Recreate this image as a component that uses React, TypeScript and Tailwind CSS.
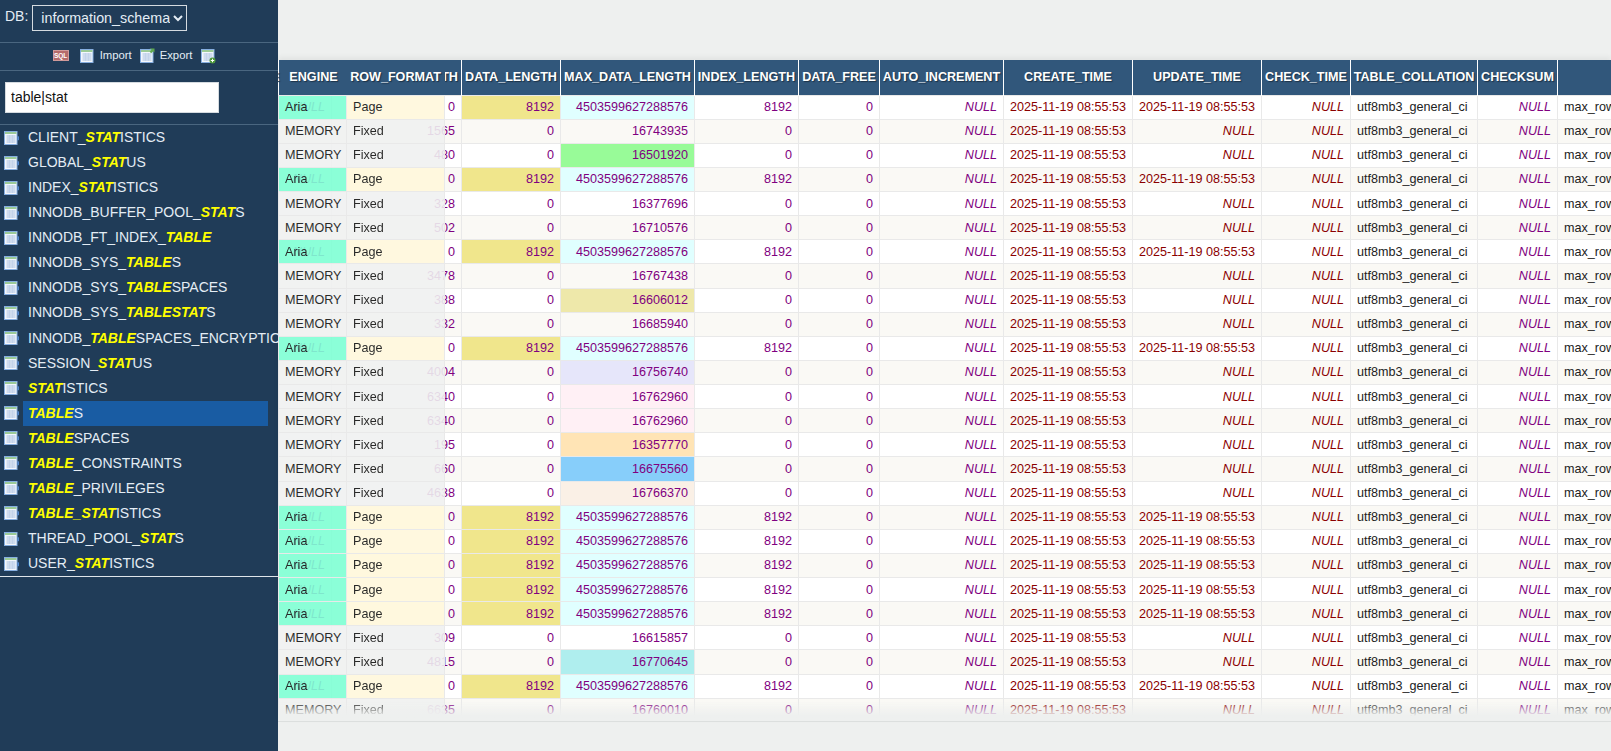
import React from 'react'

const FONT = "font-['Liberation_Sans',Arial,sans-serif]"

const rows: { aria?: boolean; avg?: string; max?: string; maxBg?: string }[] = [
  { aria: true },
  { avg: '1565', max: '16743935' },
  { avg: '480', max: '16501920', maxBg: 'bg-[#98fb98]' },
  { aria: true },
  { avg: '328', max: '16377696' },
  { avg: '502', max: '16710576' },
  { aria: true },
  { avg: '3478', max: '16767438' },
  { avg: '388', max: '16606012', maxBg: 'bg-[#eee8aa]' },
  { avg: '332', max: '16685940' },
  { aria: true },
  { avg: '4004', max: '16756740', maxBg: 'bg-[#e6e6fa]' },
  { avg: '6340', max: '16762960', maxBg: 'bg-[#fff0f5]' },
  { avg: '6340', max: '16762960', maxBg: 'bg-[#fff0f5]' },
  { avg: '195', max: '16357770', maxBg: 'bg-[#ffe4b5]' },
  { avg: '660', max: '16675560', maxBg: 'bg-[#87cefa]' },
  { avg: '4638', max: '16766370', maxBg: 'bg-[#faf0e6]' },
  { aria: true },
  { aria: true },
  { aria: true },
  { aria: true },
  { aria: true },
  { avg: '309', max: '16615857' },
  { avg: '4815', max: '16770645', maxBg: 'bg-[#afeeee]' },
  { aria: true },
  { avg: '6635', max: '16760010' },
  { avg: '7040', max: '16764160' },
]

const tables: { parts: (string | [string])[] }[] = [
  { parts: ['CLIENT_', ['STAT'], 'ISTICS'] },
  { parts: ['GLOBAL_', ['STAT'], 'US'] },
  { parts: ['INDEX_', ['STAT'], 'ISTICS'] },
  { parts: ['INNODB_BUFFER_POOL_', ['STAT'], 'S'] },
  { parts: ['INNODB_FT_INDEX_', ['TABLE']] },
  { parts: ['INNODB_SYS_', ['TABLE'], 'S'] },
  { parts: ['INNODB_SYS_', ['TABLE'], 'SPACES'] },
  { parts: ['INNODB_SYS_', ['TABLE'], ['STAT'], 'S'] },
  { parts: ['INNODB_', ['TABLE'], 'SPACES_ENCRYPTION'] },
  { parts: ['SESSION_', ['STAT'], 'US'] },
  { parts: [['STAT'], 'ISTICS'] },
  { parts: [['TABLE'], 'S'] },
  { parts: [['TABLE'], 'SPACES'] },
  { parts: [['TABLE'], '_CONSTRAINTS'] },
  { parts: [['TABLE'], '_PRIVILEGES'] },
  { parts: [['TABLE_'], ['STAT'], 'ISTICS'] },
  { parts: ['THREAD_POOL_', ['STAT'], 'S'] },
  { parts: ['USER_', ['STAT'], 'ISTICS'] },
]

function TableIcon({ plus, arrow, dot }: { plus?: boolean; arrow?: boolean; dot?: boolean }) {
  return (
    <svg width="16" height="16" viewBox="0 0 16 16" className="shrink-0">
      <rect x="1.5" y="1.5" width="12.5" height="13" fill="#f4f7fc" stroke="#86aee0" />
      <rect x="2" y="2" width="11.5" height="2" fill="#9ccb98" />
      <path d="M3.5 6h9M3.5 8h9M3.5 10h9M3.5 12h9" stroke="#a9c0e0" strokeWidth="1" fill="none" />
      <path d="M6.5 5v8M9.5 5v8" stroke="#c3d3ea" strokeWidth="1" fill="none" />
      {dot && <path d="M14.5 6a2.2 2.2 0 0 1 0 4.4z" fill="#4f86cf" />}
      {plus && <circle cx="12.5" cy="12.5" r="3" fill="#4f9a3a" />}
      {plus && <path d="M12.5 10.8v3.4M10.8 12.5h3.4" stroke="#fff" strokeWidth="1" />}
      {arrow && <path d="M10.5 0.5h5v4l-1.3-1.2-2 2-1.5-1.5 2-2z" fill="#5fa84f" />}
    </svg>
  )
}

function Sidebar() {
  return (
    <aside className={`w-[278px] shrink-0 h-full bg-[#203c58] text-[#e4edf5] ${FONT}`}>
      <div className="h-[43px] border-b border-[#4a6680] pl-[5px] pt-[5px] flex items-start gap-[4px] text-[14px]">
        <span className="leading-[22px]">DB:</span>
        <select className="w-[155px] h-[26px] border border-[#d5dbe0] bg-[#203c58] text-[#e4edf5] text-[14.3px] pl-[4px]" defaultValue="information_schema">
          <option>information_schema</option>
        </select>
      </div>
      <div className="h-[28px] border-b border-[#4a6680] pb-[2px] pr-[9px] flex items-center justify-center text-[11.3px]">
        <span className="w-[16px] h-[11px] mr-[10px] bg-[#b56b6b] border border-[#d09a9a] text-white text-[6.5px] font-bold leading-[9px] text-center">SQL</span>
        <TableIcon />
        <span className="ml-[5px] mr-[7px]">Import</span>
        <TableIcon arrow />
        <span className="ml-[5px] mr-[8px]">Export</span>
        <TableIcon plus />
      </div>
      <div className="h-[54px] border-b border-[#4a6680] px-[5px] pt-[11px]">
        <input
          readOnly
          value="table|stat"
          className="w-[214px] h-[31px] bg-white text-[#111] text-[14px] pl-[5px] pb-[2px] border border-[#d5dbe0] outline-none"
        />
      </div>
      <ul className="border-b border-[#dfe5ea] overflow-hidden">
        {tables.map((t, i) => (
          <li key={i} className="h-[25.07px] flex items-center pl-[3px]">
            <TableIcon dot />
            <span
              className={`ml-[4px] h-[25px] w-[245px] pl-[5px] flex items-center text-[14px] whitespace-nowrap ${i === 11 ? 'bg-[#195ca3]' : ''}`}
            >
              {t.parts.map((p, j) =>
                typeof p === 'string' ? (
                  <span key={j}>{p}</span>
                ) : (
                  <b key={j} className="italic text-[#ffff00]">{p[0]}</b>
                )
              )}
            </span>
          </li>
        ))}
      </ul>
    </aside>
  )
}

const cell = 'border border-[#e9e9e9] h-[24.13px] py-0 px-[6px] whitespace-nowrap overflow-hidden'
const head = 'h-[35px] border-x border-white bg-[#31577b] text-white font-bold text-center whitespace-nowrap overflow-hidden px-[2px] [text-shadow:1px_1px_1px_#1c3247]'
const frozenHead = 'h-[35px] bg-[#31577b] text-white font-bold text-center whitespace-nowrap px-0 [text-shadow:1px_1px_1px_#1c3247]'

function DataTable() {
  const cols: [string, number][] = [
    ['', 53],
    ['AVG_ROW_LENGTH', 130],
    ['DATA_LENGTH', 99],
    ['MAX_DATA_LENGTH', 134],
    ['INDEX_LENGTH', 104],
    ['DATA_FREE', 81],
    ['AUTO_INCREMENT', 124],
    ['CREATE_TIME', 129],
    ['UPDATE_TIME', 129],
    ['CHECK_TIME', 89],
    ['TABLE_COLLATION', 127],
    ['CHECKSUM', 80],
    ['', 300],
  ]
  return (
    <table className="table-fixed border-collapse w-[1579px] text-[12.6px] leading-[14px]">
      <colgroup>
        {cols.map(([, w], i) => (
          <col key={i} style={{ width: w }} />
        ))}
      </colgroup>
      <thead>
        <tr>
          {cols.map(([c], i) => (
            <th key={i} className={head}>{c}</th>
          ))}
        </tr>
      </thead>
      <tbody>
        {rows.map((r, i) => (
          <tr key={i} className={i % 2 ? 'bg-[#faf9f5]' : 'bg-white'}>
            <td className={`${cell} text-right italic text-[#800080]`}>{r.aria ? 'NULL' : ''}</td>
            <td className={`${cell} text-right text-[#800080]`}>{r.aria ? '0' : r.avg}</td>
            <td className={`${cell} text-right text-[#800080] ${r.aria ? 'bg-[#f0e68c]' : ''}`}>{r.aria ? '8192' : '0'}</td>
            <td className={`${cell} text-right text-[#800080] ${r.aria ? 'bg-[#e0ffff]' : r.maxBg ?? ''}`}>{r.aria ? '4503599627288576' : r.max}</td>
            <td className={`${cell} text-right text-[#800080]`}>{r.aria ? '8192' : '0'}</td>
            <td className={`${cell} text-right text-[#800080]`}>0</td>
            <td className={`${cell} text-right italic text-[#800080]`}>NULL</td>
            <td className={`${cell} text-[#8b0000]`}>2025-11-19 08:55:53</td>
            <td className={`${cell} text-[#8b0000] ${r.aria ? '' : 'text-right italic'}`}>{r.aria ? '2025-11-19 08:55:53' : 'NULL'}</td>
            <td className={`${cell} text-right italic text-[#8b0000]`}>NULL</td>
            <td className={`${cell} text-[#222]`}>utf8mb3_general_ci</td>
            <td className={`${cell} text-right italic text-[#800080]`}>NULL</td>
            <td className={`${cell} text-[#222]`}>max_rows=1234 page_checksum=0</td>
          </tr>
        ))}
      </tbody>
    </table>
  )
}

function FrozenColumns() {
  return (
    <table className="absolute left-0 top-0 table-fixed border-collapse w-[166px] text-[12.6px] leading-[14px]">
      <colgroup>
        <col className="w-[68px]" />
        <col className="w-[98px]" />
      </colgroup>
      <thead>
        <tr>
          <th className={`${frozenHead} pl-[2px]`}>ENGINE</th>
          <th className={frozenHead}>ROW_FORMAT</th>
        </tr>
      </thead>
      <tbody>
        {rows.map((r, i) => (
          <tr key={i} className="bg-[#f0f1f1] opacity-90">
            <td className={`${cell} text-[#111] ${r.aria ? 'bg-[#7fffd4]' : ''}`}>{r.aria ? 'Aria' : 'MEMORY'}</td>
            <td className={`${cell} text-[#111] ${r.aria ? 'bg-[#fff8dc]' : ''}`}>{r.aria ? 'Page' : 'Fixed'}</td>
          </tr>
        ))}
      </tbody>
    </table>
  )
}

export default function App() {
  return (
    <div className={`h-screen w-full flex overflow-hidden bg-[#eef0ef] ${FONT}`}>
      <Sidebar />
      <main className="flex-1 min-w-0 pt-[60px]">
        <div className="relative h-[662px] overflow-hidden border-b border-[#dcdfde] shadow-[0_-3px_5px_rgba(0,0,0,0.05)]">
          <DataTable />
          <FrozenColumns />
          {/* clipped end of the header scrolled under the frozen columns */}
          <span className="absolute left-[-7px] top-[10px] text-[12.6px] leading-[14px] font-bold text-white [text-shadow:1px_1px_1px_#1c3247]">E</span>
          <div className="absolute left-0 right-0 bottom-0 h-[20px] bg-gradient-to-b from-[#eef0ef00] to-[#eef0ef] to-75%" />
        </div>
      </main>
    </div>
  )
}
